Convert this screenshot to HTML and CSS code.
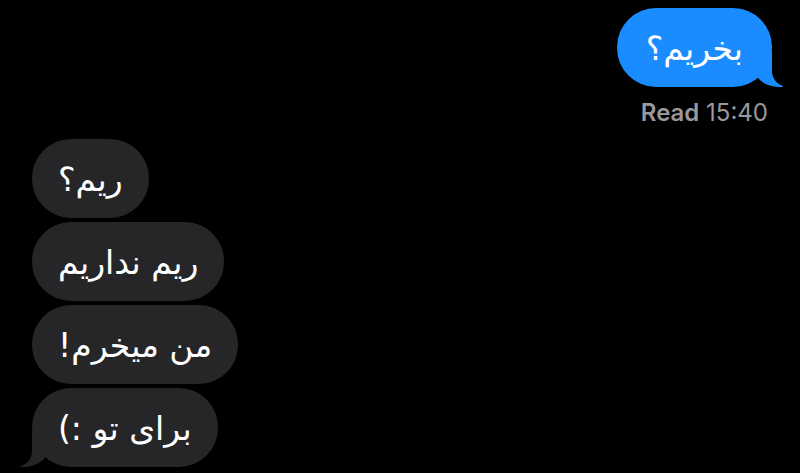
FILE: index.html
```html
<!DOCTYPE html>
<html lang="fa">
<head>
    <meta charset="UTF-8">
    <meta name="viewport" content="width=device-width, initial-scale=1.0">
    <title>Messages</title>
    <link rel="stylesheet" href="styles.css">
</head>
<body>
    <div class="chat">
        <div class="sent">
            <p class="bubble blue tail" dir="rtl">بخریم؟</p>
            <div class="status"><b>Read</b> 15:40</div>
        </div>
        <div class="received">
            <p class="bubble gray" dir="rtl">ریم؟</p>
            <p class="bubble gray" dir="rtl">ریم نداریم</p>
            <p class="bubble gray" dir="rtl">من میخرم!</p>
            <p class="bubble gray tail" dir="rtl">برای تو :)</p>
        </div>
    </div>
</body>
</html>
```

FILE: styles.css
```css
body {
    margin: 0;
    background: #000;
    font-family: "DejaVu Sans", sans-serif;
}
.chat {
    display: flex;
    flex-direction: column;
    padding: 8px 32px 0 32px;
}
.sent {
    display: flex;
    flex-direction: column;
    align-items: flex-end;
}
.received {
    display: flex;
    flex-direction: column;
    align-items: flex-start;
    gap: 4px;
    margin-top: 12px;
}
.bubble {
    position: relative;
    margin: 0;
    height: 79px;
    box-sizing: border-box;
    padding: 2px 26px 0 26px;
    display: flex;
    align-items: center;
    border-radius: 39px;
    font-size: 33px;
    color: #fff;
}
.blue {
    background: #1a8cff;
    margin-right: -4px;
    padding: 2px 29px 0 29px;
}
.gray {
    background: #262628;
}
.status {
    margin-top: 11px;
    font-family: Inter, "Liberation Sans", sans-serif;
    font-size: 24px;
    color: #98989d;
}
.status b {
    font-weight: 600;
}

/* bubble tails */
.tail::before,
.tail::after {
    content: "";
    position: absolute;
    bottom: 0;
    height: 36px;
}
.blue.tail::before {
    right: -11px;
    width: 30px;
    background: #1a8cff;
    border-bottom-left-radius: 26px 22px;
}
.blue.tail::after {
    right: -36px;
    width: 36px;
    background: #000;
    border-bottom-left-radius: 16px;
}
.gray.tail::before {
    left: -12px;
    width: 30px;
    background: #262628;
    border-bottom-right-radius: 26px 22px;
}
.gray.tail::after {
    left: -36px;
    width: 36px;
    background: #000;
    border-bottom-right-radius: 16px;
}
```
